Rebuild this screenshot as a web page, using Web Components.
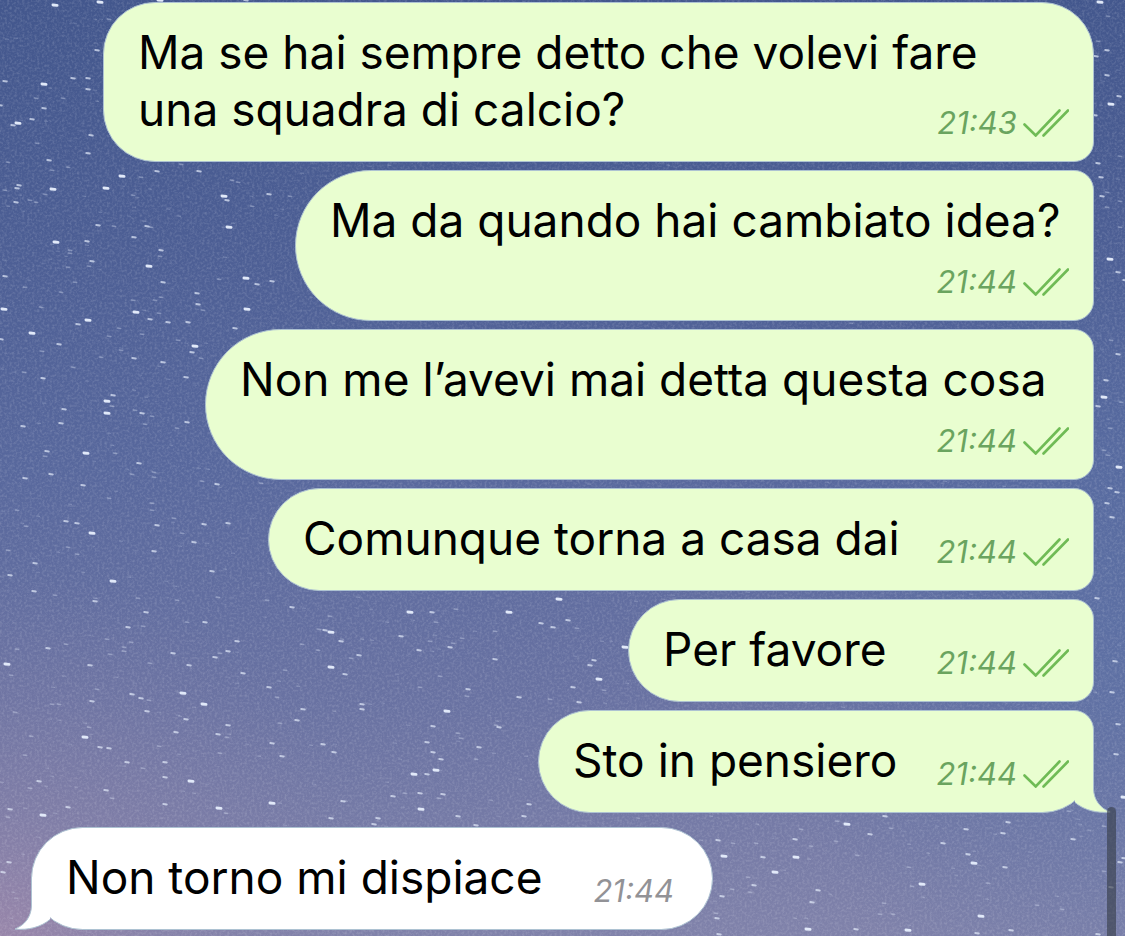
<!DOCTYPE html>
<html lang="it">
<head>
<meta charset="utf-8">
<meta name="viewport" content="width=device-width, initial-scale=1">
<title>Chat</title>
<style>
  body { margin: 0; background: #5f6ca0; font-family: Inter, "Liberation Sans", sans-serif; }
</style>
</head>
<body>
<chat-screen>
  <chat-bubble style="--width: 991px" corners="top" time="21:43" read>Ma se hai sempre detto che volevi fare<br>una squadra di calcio?</chat-bubble>
  <chat-bubble style="--width: 799px" stacked time="21:44" read>Ma da quando hai cambiato idea?</chat-bubble>
  <chat-bubble style="--width: 889px" stacked time="21:44" read>Non me l’avevi mai detta questa cosa</chat-bubble>
  <chat-bubble style="--width: 826px" time="21:44" read>Comunque torna a casa dai</chat-bubble>
  <chat-bubble style="--width: 466px" time="21:44" read>Per favore</chat-bubble>
  <chat-bubble style="--width: 556px" tail time="21:44" read>Sto in pensiero</chat-bubble>
  <chat-bubble style="--width: 682px" incoming tail time="21:44">Non torno mi dispiace</chat-bubble>
</chat-screen>

<template id="screen-template">
  <style>
    :host { display: block; position: relative; min-height: 100vh; overflow: hidden; box-sizing: border-box; }
    star-wallpaper { position: absolute; inset: 0; }
    main { position: relative; display: flex; flex-direction: column; gap: 8px; padding: 2px 31px 6px; }
    .scrollbar { position: absolute; right: 9px; top: 807px; bottom: -8px; width: 9px; border-radius: 5px; background: rgba(52, 58, 68, .6); }
  </style>
  <star-wallpaper></star-wallpaper>
  <main><slot></slot></main>
  <div class="scrollbar"></div>
</template>

<template id="wallpaper-template">
  <style>
    :host { display: block; overflow: hidden; }
    svg { display: block; width: 100%; height: 100%; }
  </style>
  <svg viewBox="0 0 1125 936" preserveAspectRatio="xMidYMid slice" aria-hidden="true">
    <defs>
      <linearGradient id="sky" x1="0" y1="0" x2="0" y2="1">
        <stop offset="0" stop-color="#43578d"/>
        <stop offset=".25" stop-color="#4c5e94"/>
        <stop offset=".5" stop-color="#58689d"/>
        <stop offset=".75" stop-color="#6972a2"/>
        <stop offset="1" stop-color="#8082aa"/>
      </linearGradient>
      <radialGradient id="glow" gradientUnits="userSpaceOnUse" cx="0" cy="970" r="400">
        <stop offset="0" stop-color="#a888aa" stop-opacity=".75"/>
        <stop offset=".4" stop-color="#9585a9" stop-opacity=".35"/>
        <stop offset="1" stop-color="#8a84aa" stop-opacity="0"/>
      </radialGradient>
      <radialGradient id="cool" gradientUnits="userSpaceOnUse" cx="1180" cy="640" r="420">
        <stop offset="0" stop-color="#5670a6" stop-opacity=".6"/>
        <stop offset="1" stop-color="#5670a6" stop-opacity="0"/>
      </radialGradient>
      <filter id="grain" x="0" y="0" width="100%" height="100%">
        <feTurbulence type="fractalNoise" baseFrequency=".4" numOctaves="2" seed="4"/>
        <feColorMatrix values="0 0 0 0 1  0 0 0 0 1  0 0 0 0 1  1.2 0 0 0 -.5"/>
      </filter>
    </defs>
    <rect width="1125" height="936" fill="url(#sky)"/>
    <rect width="1125" height="936" fill="url(#glow)"/>
    <rect width="1125" height="936" fill="url(#cool)"/>
    <rect width="1125" height="936" filter="url(#grain)" opacity=".28"/>
    <g id="stars" stroke-linecap="round"></g>
  </svg>
</template>

<template id="bubble-template">
  <style>
    :host { --fill: #e9fed0; --meta: #6aa45f; display: block; position: relative; align-self: flex-end; box-sizing: border-box; width: var(--width); max-width: 100%; }
    :host([incoming]) { --fill: #fff; --meta: #929296; align-self: flex-start; margin-top: 6px; }
    .body { display: grid; box-sizing: border-box; padding: 21px 24px 23px 34px; border: 1px solid #adc2d2; background: var(--fill); border-radius: 52px 20px 20px 52px; }
    :host([corners="top"]) .body { border-radius: 52px 52px 20px 52px; }
    :host([stacked]) .body { border-radius: 76px 20px 20px 76px; }
    :host([tail]) .body { border-radius: 52px 20px 52px 52px; }
    :host([incoming]) .body { border-radius: 52px; padding-right: 38px; }
    .text { grid-area: 1 / 1; margin: 0; font-size: 46px; line-height: 57px; color: #000; }
    .meta { grid-area: 1 / 1; place-self: end; display: flex; align-items: center; gap: 6px; height: 28px; padding-bottom: 1px; color: var(--meta); }
    :host([stacked]) .meta { grid-area: 2 / 1; margin-top: 19px; }
    time { font-size: 31px; line-height: 28px; font-style: italic; }
    .checks { display: block; width: 46px; height: 28px; }
    :host(:not([read])) .checks, :host(:not([tail])) .tail { display: none; }
    .tail { position: absolute; right: -17px; bottom: 0; width: 70px; height: 54px; }
    :host([incoming]) .tail { right: auto; left: -17px; transform: scaleX(-1); }
  </style>
  <div class="body">
    <p class="text"><slot></slot></p>
    <div class="meta">
      <time></time>
      <svg class="checks" viewBox="0 0 46 28" fill="none" stroke="#6fbb55" stroke-width="2.6" stroke-linecap="round" role="img" aria-label="Letto">
        <path d="M1.500 15.500L12.700 26.500L36.500 1.500M20.500 26.500L45 1.500"/>
      </svg>
    </div>
  </div>
  <svg class="tail" viewBox="0 0 70 54" aria-hidden="true">
    <path d="M52.500 1V30C53 41 59 49 69 53C56 54.500 43 51 34 43.500V20L44 1Z" fill="var(--fill)"/>
    <path d="M52.500 1V30C53 41 59 49 69 53C56 54.500 43 51 34 43.500" fill="none" stroke="#adc2d2" stroke-width="1"/>
  </svg>
</template>

<script>
  const stamp = (host, id) => {
    const root = host.attachShadow({ mode: 'open' });
    root.append(document.getElementById(id).content.cloneNode(true));
    return root;
  };

  // x, y, brightness (1 faint, 2 medium, 3 bright)
  const STARS = [
    55,5,3, 100,2,3, 160,0,3, 246,0,2, 109,19,1, 97,50,2, 5,81,2, 44,84,3, 73,78,2, 88,78,2, 88,89,2, 44,108,2, 63,98,1, 36,98,1, 0,105,2, 32,119,2, 18,123,3, 13,125,2, 91,135,2, 88,153,2, 49,160,2, 37,143,1, 8,162,1, 52,170,1, 68,167,1,
    157,171,2, 199,171,2, 122,176,3, 141,177,1, 181,164,1, 106,188,3, 53,189,3, 19,185,2, 17,188,2, 5,190,1, 16,202,2, 30,200,1, 36,202,1, 45,194,1, 224,196,3, 227,200,2, 232,180,1, 238,182,1, 269,194,2, 290,196,1, 133,195,1, 252,206,1, 98,225,2, 114,226,1, 147,226,2, 151,227,1, 229,227,3, 134,237,2, 56,242,3, 87,241,2, 70,250,1, 70,253,1, 161,250,2, 160,256,1, 92,261,2, 89,266,1, 68,267,1, 149,266,3, 5,276,2, 25,287,1, 75,282,1, 163,282,2, 246,278,3, 257,284,2, 272,281,2, 219,279,1, 197,293,2, 61,292,1,
    133,300,1, 198,304,2, 161,297,1, 203,310,1, 247,309,3, 4,309,3, 41,307,1, 136,312,3, 159,313,1, 155,300,1, 88,320,3, 78,324,2, 150,319,2, 168,322,2, 188,322,2, 235,328,2, 32,333,3, 119,328,1, 109,336,1, 142,334,1, 1,339,2, 59,344,2, 178,340,1, 195,346,3, 192,352,2, 42,351,1, 121,350,1, 101,357,1, 134,358,2, 201,358,1, 163,362,2, 73,367,1, 24,372,1, 43,378,2, 186,377,2, 113,395,2, 107,401,3, 107,413,3, 64,409,2, 112,406,1, 135,410,1, 142,413,2, 152,416,1, 61,423,2, 187,422,2, 23,426,2, 145,424,1, 177,428,1, 47,451,2, 45,456,1, 86,453,3, 139,463,2, 115,453,1, 154,472,1, 51,474,2, 25,478,2, 132,474,1, 154,477,1, 202,481,1, 217,484,2, 83,485,2, 261,483,1,
    109,498,1, 152,503,1, 152,510,1, 17,510,1, 66,521,2, 77,523,2, 26,526,1, 92,533,3, 174,518,1, 157,525,2, 204,524,2, 228,523,2, 182,533,1, 194,542,2, 8,550,1, 68,547,1, 154,551,2, 77,554,1, 35,563,2, 212,571,2, 10,575,2, 113,581,3, 34,591,2, 55,595,1, 95,601,2, 138,598,1, 218,597,1, 177,600,1, 267,600,1, 292,607,2, 146,612,2, 128,627,2, 143,626,1, 187,622,1, 205,622,2, 330,616,1, 318,650,1, 107,639,1, 410,612,3, 432,612,2, 456,609,1, 436,622,1, 331,632,3, 325,630,2, 319,629,1, 341,641,2, 302,644,1, 401,636,2, 430,641,1, 462,638,1, 453,643,1, 450,647,2, 419,650,2,
    131,642,1, 124,647,1, 124,651,1, 17,649,1, 48,648,2, 66,644,1, 110,654,1, 7,664,3, 11,675,1, 90,665,2, 150,663,1, 173,653,2, 189,665,2, 237,641,2, 228,651,2, 220,653,1, 215,657,2, 243,673,2, 331,667,3, 345,674,2, 359,655,2, 351,658,1, 285,670,1, 97,689,1, 92,701,2, 132,694,2, 141,698,2, 149,700,1, 183,693,3, 204,704,3, 147,711,2, 15,712,1, 52,704,1, 59,704,1, 269,687,2, 277,697,1, 186,719,2, 176,732,2, 228,725,2, 303,709,2, 297,720,2, 280,723,1, 362,704,2, 362,709,2, 447,711,3, 420,687,1, 440,676,1, 468,689,2,
    85,737,3, 31,736,1, 89,727,1, 218,734,2, 227,737,1, 272,743,2, 100,747,2, 109,748,2, 159,746,1, 282,756,2, 323,744,2, 334,752,2, 127,762,2, 143,768,1, 165,762,2, 165,777,2, 220,753,1, 25,755,1, 191,781,3, 39,781,2, 30,788,1, 106,790,2, 112,798,1, 165,804,2, 68,807,2, 43,815,3, 10,809,2, 219,808,3, 226,813,1, 272,803,3, 343,801,2, 331,818,2, 374,824,2, 378,818,2, 421,809,3, 433,726,2, 458,733,1, 427,742,2, 433,752,2, 441,759,2, 461,738,1, 479,747,2, 436,770,3, 427,774,2, 414,774,3, 393,796,2, 405,793,1, 420,793,2, 443,794,2, 439,798,1, 458,816,2, 476,825,2, 476,759,1, 499,727,2,
    559,599,3, 509,612,3, 541,623,2, 553,627,2, 568,620,2, 577,628,1, 495,631,1, 495,659,2, 467,696,1, 625,647,3, 594,660,2, 590,665,2, 599,679,3, 604,690,1, 573,687,2, 519,697,2, 579,702,2, 550,699,1, 529,804,2, 524,816,2, 496,725,1,
    3,872,2, 9,862,2, 8,817,1, 718,840,2, 733,843,1, 724,856,3, 756,843,1, 763,857,2, 795,839,2, 796,857,3, 811,846,1, 801,829,1, 847,824,3, 837,821,1, 870,834,2, 885,816,2, 891,828,1, 836,841,1, 857,855,1, 775,872,3, 748,877,1, 754,885,2, 732,889,1, 750,892,1, 722,896,2, 818,890,2, 812,902,2, 716,913,1, 717,918,2, 719,934,2, 808,929,3, 856,929,2, 884,903,1, 880,914,1, 893,914,1, 908,930,3, 909,867,1, 922,884,3, 912,886,1, 943,843,2, 966,829,2, 968,854,2, 974,863,3, 1005,867,2, 1003,833,2, 1008,822,2, 1069,811,1, 1073,839,2, 988,883,1, 981,916,3, 1011,930,2, 977,933,2, 1037,905,1, 1062,909,1, 1098,934,2, 1104,826,1, 1104,871,1, 1111,887,2, 1120,862,2, 1124,858,2,
    1100,2,3, 1107,50,2, 1096,56,2, 1107,75,2, 1119,96,2, 1111,104,3, 1095,115,2, 1098,41,1, 1108,16,1, 1120,156,1, 1098,163,2, 1101,177,2, 1102,196,2, 1107,192,1, 1107,207,1, 1120,201,1, 1120,227,1, 1110,259,3, 1118,272,2, 1125,280,2, 1111,340,1, 1118,354,2, 1106,380,2, 1104,397,3, 1098,406,2, 1110,428,1, 1121,402,1, 1104,450,1, 1108,455,1, 1119,467,3, 1110,488,2, 1117,492,2, 1107,503,2, 1112,517,2, 1097,598,2, 1115,661,2, 1112,692,2, 1118,724,2, 1116,754,2, 1124,797,3
  ];

  customElements.define('star-wallpaper', class extends HTMLElement {
    connectedCallback() {
      const root = stamp(this, 'wallpaper-template');
      const group = root.getElementById('stars');
      let markup = '';
      const streak = (x, y, length, width, opacity) => {
        markup += `<path d="M${x - length / 2} ${y}l${length} .4" stroke="#e4ecfb" stroke-width="${width}" opacity="${opacity}"/>`;
      };
      for (let i = 0; i < STARS.length; i += 3) {
        const level = STARS[i + 2];
        streak(STARS[i], STARS[i + 1], [3.4, 3.4, 4.2][level - 1], [1.5, 2, 2.8][level - 1], [.35, .7, .98][level - 1]);
      }
      // Faint dust between the named stars, from a fixed seed.
      let seed = 7;
      const random = () => (seed = (seed * 16807) % 2147483647) / 2147483647;
      for (let i = 0; i < 900; i++) {
        streak(Math.round(random() * 1125), Math.round(random() * 936), 3, 1.2, (.08 + random() * .18).toFixed(2));
      }
      group.innerHTML = markup;
    }
  });

  customElements.define('chat-bubble', class extends HTMLElement {
    connectedCallback() {
      const time = stamp(this, 'bubble-template').querySelector('time');
      time.textContent = this.getAttribute('time');
      time.dateTime = this.getAttribute('time');
    }
  });

  customElements.define('chat-screen', class extends HTMLElement {
    connectedCallback() { stamp(this, 'screen-template'); }
  });
</script>
</body>
</html>
